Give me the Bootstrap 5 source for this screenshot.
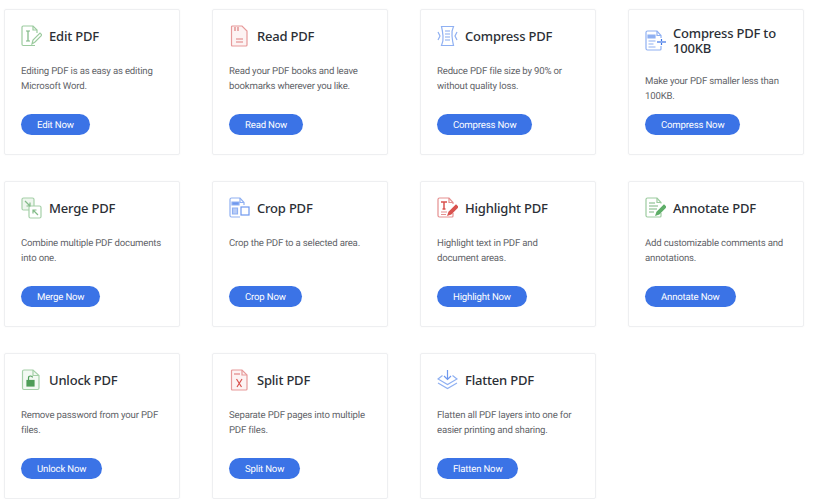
<!DOCTYPE html>
<html lang="en"><head><meta charset="utf-8"><title>PDF tools</title>
<link href="https://cdn.jsdelivr.net/npm/bootstrap@5.3.0/dist/css/bootstrap.min.css" rel="stylesheet">
<style>
html,body{background:#fff;overflow:hidden}
body{font-family:"Noto Sans","Open Sans",sans-serif}
.tool-grid{display:grid;grid-template-columns:repeat(4,176px);grid-auto-rows:146px;column-gap:32px;row-gap:26px;padding:9px 0 0 4px}
.tool-card{border:1px solid #eeeff1;border-radius:2px;padding:13px 16px 19px 16px;box-shadow:0 0 2px rgba(0,0,0,.04)}
.tool-head{min-height:26px;gap:7px}
.tool-head svg{flex:none;width:21px;height:22px}
.tool-title{font-size:13px;line-height:15px;font-weight:500;color:#2b2f36;margin:0;padding:3px 0;letter-spacing:-.2px}
.tool-desc{font-family:Roboto,"Noto Sans",sans-serif;text-rendering:geometricPrecision;font-size:9.6px;letter-spacing:-.18px;line-height:14.6px;color:#5f6368;margin:16px 0 0 0}
.tool-btn{font-family:Roboto,"Noto Sans",sans-serif;text-rendering:geometricPrecision;font-size:9.6px;letter-spacing:-.18px;line-height:13px;padding:5px 16px 3px;height:21px;background:#3b73e6;border:0;color:#fff;border-radius:11px}
.tool-btn:hover{background:#3b73e6;color:#fff}
</style></head><body>
<div class="tool-grid">

<div class="tool-card d-flex flex-column align-items-start">
<div class="tool-head d-flex align-items-center"><svg viewBox="0 0 21 22" fill="none" stroke="#9ccb9f" stroke-width="1.2"><path d="M14 20.500H2.200q-1.200 0-1.200-1.200V2.200Q1 1 2.200 1H12l4 4v3"/><path d="M12 1v4h4"/><path d="M5 6h4M7 6v10M5 16h4" stroke="#7cb682"/><path d="M11 19l1-4 7-7 2 2-7 7z"/></svg><h2 class="tool-title">Edit PDF</h2></div>
<p class="tool-desc">Editing PDF is as easy as editing Microsoft Word.</p>
<a class="btn tool-btn mt-auto" href="#">Edit Now</a></div>

<div class="tool-card d-flex flex-column align-items-start">
<div class="tool-head d-flex align-items-center"><svg viewBox="0 0 21 22" fill="none" stroke="#e79a9a" stroke-width="1.2"><path d="M3.500 1H13l5 5v14q0 1-1 1H3.500q-1 0-1-1V2q0-1 1-1z" fill="#fdf3f3"/><path d="M6 2v4M9 2v4" stroke="#dd7f7f"/><path d="M7 14h7M7 17h7" stroke="#dd7f7f"/></svg><h2 class="tool-title">Read PDF</h2></div>
<p class="tool-desc">Read your PDF books and leave bookmarks wherever you like.</p>
<a class="btn tool-btn mt-auto" href="#">Read Now</a></div>

<div class="tool-card d-flex flex-column align-items-start">
<div class="tool-head d-flex align-items-center"><svg viewBox="0 0 21 22" fill="none" stroke="#8fb0f2" stroke-width="1.200"><path d="M4.500 1.500h12q-2 4-1.500 9.500t1.500 9.500h-12q2-4 1.500-9.500T4.500 1.500z"/><path d="M8 6h5M8 9h5M8 12h5M8 15h5" stroke="#86a9f0"/><path d="M1 7l2 4-2 4M20 7l-2 4 2 4"/></svg><h2 class="tool-title">Compress PDF</h2></div>
<p class="tool-desc">Reduce PDF file size by 90% or without quality loss.</p>
<a class="btn tool-btn mt-auto" href="#">Compress Now</a></div>

<div class="tool-card d-flex flex-column align-items-start">
<div class="tool-head d-flex align-items-center"><svg viewBox="0 0 21 22" fill="none" stroke="#8fb0f2" stroke-width="1.200"><path d="M16 8V5.500L12 1H2.500Q1 1 1 2.500v16Q1 20 2.500 20H15q1 0 1-1v-3"/><path d="M12 1v4.500h4"/><path d="M3 5h7v3H3z" fill="#8fb0f2"/><path d="M3.500 11h7M3.500 14h5M3.500 17h7"/><path d="M12 12h9" stroke="#3b73e6"/><path d="M16.500 9v2M16.500 13v2" stroke="#3b73e6"/></svg><h2 class="tool-title">Compress PDF to 100KB</h2></div>
<p class="tool-desc">Make your PDF smaller less than 100KB.</p>
<a class="btn tool-btn mt-auto" href="#">Compress Now</a></div>

<div class="tool-card d-flex flex-column align-items-start">
<div class="tool-head d-flex align-items-center"><svg viewBox="0 0 21 22" fill="none" stroke="#a5d0a8" stroke-width="1.200"><rect x="1" y="1" width="12" height="12" rx="1.500" fill="#eef6ee"/><rect x="8" y="9" width="12" height="12" rx="1.500" fill="#fff"/><path d="M4 4l5 5M9 5.500V9H5.500M17 18l-5-5M12 16.500V13h3.500" stroke="#83bb88"/></svg><h2 class="tool-title">Merge PDF</h2></div>
<p class="tool-desc">Combine multiple PDF documents into one.</p>
<a class="btn tool-btn mt-auto" href="#">Merge Now</a></div>

<div class="tool-card d-flex flex-column align-items-start">
<div class="tool-head d-flex align-items-center"><svg viewBox="0 0 21 22" fill="none" stroke="#8fb0f2" stroke-width="1.200"><path d="M15 8V5.500L11 1H2.500Q1 1 1 2.500v16Q1 20 2.500 20H11"/><path d="M11 1v4.500h4"/><path d="M3 5h7v3H3z" fill="#6f98ee"/><path d="M3.500 11h5v6h-5z" fill="#b9cdf7"/><rect x="12" y="10" width="8" height="8" stroke="#6f98ee"/></svg><h2 class="tool-title">Crop PDF</h2></div>
<p class="tool-desc">Crop the PDF to a selected area.</p>
<a class="btn tool-btn mt-auto" href="#">Crop Now</a></div>

<div class="tool-card d-flex flex-column align-items-start">
<div class="tool-head d-flex align-items-center"><svg viewBox="0 0 21 22" fill="none" stroke="#e58f8f" stroke-width="1.200"><path d="M16 7V5.500L12 1H2.500Q1 1 1 2.500v16Q1 20 2.500 20H15q1 0 1-1v-3"/><path d="M12 1v4.500h4"/><path d="M4 5h6M7 5v7M5.500 12h3" stroke="#d9534f" stroke-width="1.500"/><path d="M4 15h6M4 17.500h5"/><path d="M11 18l1-3 7-7 2 2-7 7z" fill="#d9534f" stroke="#d9534f"/></svg><h2 class="tool-title">Highlight PDF</h2></div>
<p class="tool-desc">Highlight text in PDF and document areas.</p>
<a class="btn tool-btn mt-auto" href="#">Highlight Now</a></div>

<div class="tool-card d-flex flex-column align-items-start">
<div class="tool-head d-flex align-items-center"><svg viewBox="0 0 21 22" fill="none" stroke="#9ccb9f" stroke-width="1.200"><path d="M16 6.500V5.500L12 1H2.500Q1 1 1 2.500v16Q1 20 2.500 20H15q1 0 1-1v-3"/><path d="M12 1v4.500h4"/><path d="M4 6h6M4 9h9M4 12h8M4 15h5" stroke="#7cb682"/><path d="M11 18l1-3 7-7 2 2-7 7z" fill="#5fae69" stroke="#5fae69"/></svg><h2 class="tool-title">Annotate PDF</h2></div>
<p class="tool-desc">Add customizable comments and annotations.</p>
<a class="btn tool-btn mt-auto" href="#">Annotate Now</a></div>

<div class="tool-card d-flex flex-column align-items-start">
<div class="tool-head d-flex align-items-center"><svg viewBox="0 0 21 22" fill="none" stroke="#a5d0a8" stroke-width="1.200"><path d="M3 1h9l6 5.500V19q0 1.500-1.500 1.500H3q-1.500 0-1.500-1.500V2.500Q1.500 1 3 1z" fill="#f3f9f3"/><path d="M12 1v5.500h6"/><rect x="6" y="11.500" width="7" height="5.500" fill="#4f9d58" stroke="#4f9d58"/><path d="M7.500 11V9q0-2 2-2t2 1.500" stroke="#4f9d58"/></svg><h2 class="tool-title">Unlock PDF</h2></div>
<p class="tool-desc">Remove password from your PDF files.</p>
<a class="btn tool-btn mt-auto" href="#">Unlock Now</a></div>

<div class="tool-card d-flex flex-column align-items-start">
<div class="tool-head d-flex align-items-center"><svg viewBox="0 0 21 22" fill="none" stroke="#e79a9a" stroke-width="1.200"><path d="M3.500 1H13l5 5v14q0 1-1 1H3.500q-1 0-1-1V2q0-1 1-1z" fill="#fdf3f3"/><path d="M13 1v5h5"/><path d="M5 5h6" stroke-width="1.500"/><path d="M7.500 10l5 8M13 10l-5 8" stroke="#d9534f"/></svg><h2 class="tool-title">Split PDF</h2></div>
<p class="tool-desc">Separate PDF pages into multiple PDF files.</p>
<a class="btn tool-btn mt-auto" href="#">Split Now</a></div>

<div class="tool-card d-flex flex-column align-items-start">
<div class="tool-head d-flex align-items-center"><svg viewBox="0 0 21 22" fill="none" stroke="#8fb0f2" stroke-width="1.200"><path d="M10.500 1v9M7 7l3.500 3.500L14 7" stroke="#6f98ee"/><path d="M5.500 6.500L1 10l9.500 5.500L20 10l-4.500-3.500"/><path d="M1 14l9.500 5.500L20 14"/></svg><h2 class="tool-title">Flatten PDF</h2></div>
<p class="tool-desc">Flatten all PDF layers into one for easier printing and sharing.</p>
<a class="btn tool-btn mt-auto" href="#">Flatten Now</a></div>

</div>
</body></html>
